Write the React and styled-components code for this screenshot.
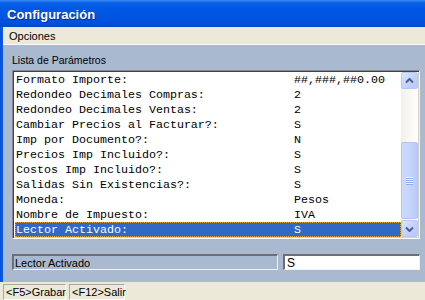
import React from "react";
import styled, { createGlobalStyle } from "styled-components";

const Global = createGlobalStyle`
  html, body { margin: 0; padding: 0; }
  body { width: 425px; height: 300px; overflow: hidden; background: #ECE9D8; }
`;

const Window = styled.div`
  width: 425px;
  height: 300px;
  display: flex;
  flex-direction: column;
  font-family: "Liberation Sans", Arial, sans-serif;
`;

const TitleBar = styled.div`
  height: 27px;
  flex: 0 0 27px;
  display: flex;
  align-items: center;
  padding-left: 7px;
  box-sizing: border-box;
  background: linear-gradient(
    to bottom,
    #3a8cf6 0%,
    #0a62e8 10%,
    #0058e6 30%,
    #0055e3 60%,
    #0050dc 85%,
    #0046c8 100%
  );
  color: #fff;
  font-weight: bold;
  font-size: 13px;
  text-shadow: 1px 1px 0 #0b2a8c;
  padding-top: 1px;
`;

const Frame = styled.div`
  flex: 1;
  display: flex;
  min-height: 0;
`;

const FrameEdge = styled.div`
  width: 3px;
  flex: 0 0 3px;
  background: linear-gradient(to right, #0a4fd8, #0058e6 60%, #1560e0);
`;

const Content = styled.div`
  flex: 1;
  display: flex;
  flex-direction: column;
  min-width: 0;
`;

const MenuBar = styled.div`
  height: 18px;
  flex: 0 0 18px;
  box-sizing: border-box;
  background: #ece9d8;
  border-bottom: 1px solid #fbfaf6;
  display: flex;
  align-items: center;
  padding-left: 6px;
  font-size: 11px;
  color: #000;
`;

const Body = styled.div`
  flex: 1;
  background: #a9b9cf;
  padding: 10px 5px 0 9px;
  display: flex;
  flex-direction: column;
`;

const GroupLabel = styled.div`
  height: 15px;
  font-size: 10.5px;
  color: #000;
  line-height: 11px;
`;

const ListBox = styled.div`
  height: 169px;
  box-sizing: border-box;
  display: flex;
  background: #fff;
  border-top: 1px solid #8a8a86;
  border-left: 1px solid #8a8a86;
  border-right: 1px solid #f4f3ee;
  border-bottom: 1px solid #fff;
  box-shadow: inset 1px 1px 0 #404040, inset -1px -1px 0 #d4d0c8;
  padding: 1px;
`;

const Rows = styled.div`
  flex: 1;
  display: flex;
  flex-direction: column;
  padding-left: 1px;
`;

const Row = styled.div`
  height: 15px;
  flex: 0 0 15px;
  box-sizing: border-box;
  display: flex;
  align-items: center;
  padding-left: 1px;
  font-family: "Liberation Mono", "Courier New", monospace;
  font-size: 11.67px;
  white-space: pre;
  color: ${(p) => (p.$selected ? "#fff" : "#000")};
  background: ${(p) => (p.$selected ? "#316ac5" : "transparent")};
  outline: ${(p) => (p.$selected ? "1px dotted #d9a13f" : "none")};
  outline-offset: -1px;
`;

const Name = styled.span`
  width: 278px;
  flex: 0 0 278px;
`;

const Value = styled.span``;

const ScrollBar = styled.div`
  width: 17px;
  flex: 0 0 17px;
  display: flex;
  flex-direction: column;
  background: linear-gradient(to right, #f3f1ec, #fefefb);
`;

const ScrollButton = styled.div`
  height: 17px;
  flex: 0 0 17px;
  box-sizing: border-box;
  border: 1px solid #b7c9f3;
  border-radius: 2px;
  background: linear-gradient(135deg, #dbe6fe 0%, #c3d3fd 50%, #b4c8fb 100%);
  display: flex;
  align-items: center;
  justify-content: center;
`;

const Track = styled.div`
  flex: 1;
  display: flex;
  flex-direction: column;
  justify-content: flex-end;
  padding-bottom: 1px;
`;

const Thumb = styled.div`
  height: 77px;
  box-sizing: border-box;
  border: 1px solid #b1c4f2;
  border-radius: 2px;
  background: linear-gradient(to right, #cbd9fd 0%, #c5d5fc 50%, #b9cbf8 100%);
  display: flex;
  align-items: center;
  justify-content: center;
`;

const Grip = styled.div`
  width: 7px;
  display: flex;
  flex-direction: column;
  gap: 1px;
  & > i {
    display: block;
    height: 1px;
    background: #eef3ff;
    box-shadow: 0 1px 0 #8faaef;
  }
`;

const FieldRow = styled.div`
  display: flex;
  gap: 5px;
  margin-top: 15px;
`;

const LabelField = styled.div`
  width: 266px;
  height: 16px;
  box-sizing: border-box;
  border-top: 2px solid #6f6f6f;
  border-left: 2px solid #6f6f6f;
  border-bottom: 1px solid #eef2f8;
  border-right: 1px solid #eef2f8;
  background: #a9b9cf;
  font-size: 11px;
  display: flex;
  align-items: center;
  padding-left: 1px;
  color: #000;
`;

const Input = styled.div`
  width: 137px;
  height: 16px;
  box-sizing: border-box;
  border-top: 2px solid #6f6f6f;
  border-left: 2px solid #6f6f6f;
  border-bottom: 1px solid #eef2f8;
  border-right: 1px solid #eef2f8;
  background: #fff;
  font-size: 12px;
  display: flex;
  align-items: center;
  padding-left: 2px;
  color: #000;
`;

const StatusBar = styled.div`
  height: 18px;
  flex: 0 0 18px;
  box-sizing: border-box;
  background: #ece9d8;
  display: flex;
  align-items: flex-end;
  gap: 3px;
  padding: 2px 0 0 3px;
`;

const Panel = styled.div`
  height: 16px;
  box-sizing: border-box;
  border-top: 1px solid #aca899;
  border-left: 1px solid #aca899;
  border-right: 1px solid #fff;
  border-bottom: 1px solid #fff;
  font-size: 11px;
  display: flex;
  align-items: center;
  padding: 0 1px 0 2px;
  width: ${(p) => p.$w}px;
  color: #000;
`;

const Chevron = ({ down }) => (
  <svg width="9" height="6" viewBox="0 0 9 6">
    <path
      d={down ? "M1 1.5 L4.5 5 L8 1.5" : "M1 4.5 L4.5 1 L8 4.5"}
      fill="none"
      stroke="#4d6185"
      strokeWidth="2"
    />
  </svg>
);

const params = [
  ["Formato Importe:", "##,###,##0.00"],
  ["Redondeo Decimales Compras:", "2"],
  ["Redondeo Decimales Ventas:", "2"],
  ["Cambiar Precios al Facturar?:", "S"],
  ["Imp por Documento?:", "N"],
  ["Precios Imp Incluido?:", "S"],
  ["Costos Imp Incluido?:", "S"],
  ["Salidas Sin Existencias?:", "S"],
  ["Moneda:", "Pesos"],
  ["Nombre de Impuesto:", "IVA"],
  ["Lector Activado:", "S"],
];

export default function App() {
  return (
    <>
      <Global />
      <Window>
        <TitleBar>Configuración</TitleBar>
        <Frame>
          <FrameEdge />
          <Content>
            <MenuBar>Opciones</MenuBar>
            <Body>
              <GroupLabel>Lista de Parámetros</GroupLabel>
              <ListBox>
                <Rows>
                  {params.map(([n, v], i) => (
                    <Row key={n} $selected={i === params.length - 1}>
                      <Name>{n}</Name>
                      <Value>{v}</Value>
                    </Row>
                  ))}
                </Rows>
                <ScrollBar>
                  <ScrollButton>
                    <Chevron />
                  </ScrollButton>
                  <Track>
                    <Thumb>
                      <Grip>
                        <i />
                        <i />
                        <i />
                        <i />
                      </Grip>
                    </Thumb>
                  </Track>
                  <ScrollButton>
                    <Chevron down />
                  </ScrollButton>
                </ScrollBar>
              </ListBox>
              <FieldRow>
                <LabelField>Lector Activado</LabelField>
                <Input>S</Input>
              </FieldRow>
            </Body>
          </Content>
        </Frame>
        <StatusBar>
          <Panel $w={63}>&lt;F5&gt;Grabar</Panel>
          <Panel $w={56}>&lt;F12&gt;Salir</Panel>
        </StatusBar>
      </Window>
    </>
  );
}
